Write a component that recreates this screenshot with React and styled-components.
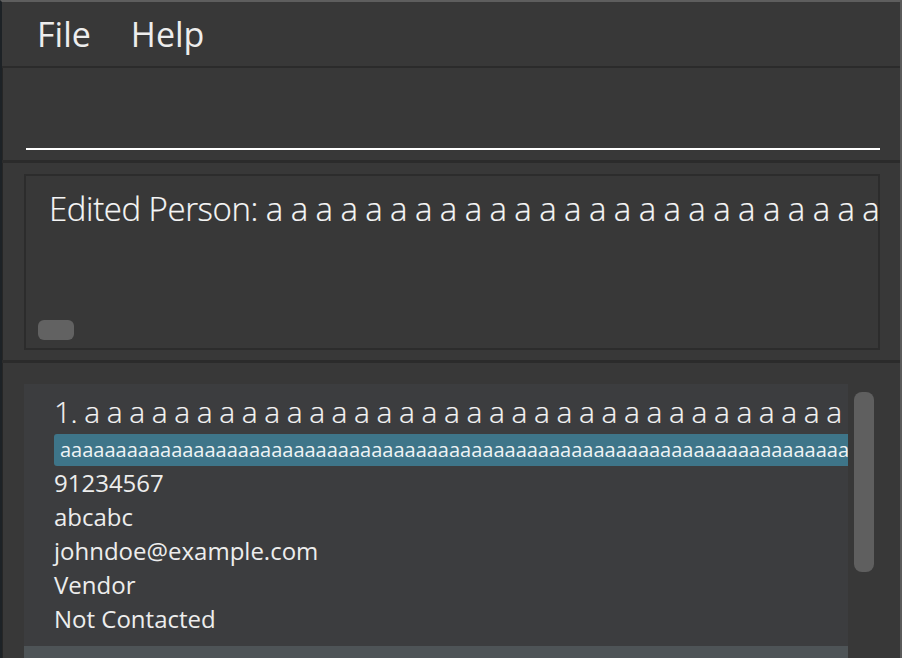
import styled, { createGlobalStyle } from "styled-components";

const GlobalStyle = createGlobalStyle`
  html, body {
    margin: 0;
    padding: 0;
    background: #383838;
  }
  * {
    box-sizing: border-box;
  }
`;

const nameText = "1. " + Array(34).fill("a").join(" ");
const editedText = "Edited Person: " + Array(25).fill("a").join(" ");
const tagText = "a".repeat(90);

const details = [
  "91234567",
  "abcabc",
  "johndoe@example.com",
  "Vendor",
  "Not Contacted",
];

const App = () => {
  return (
    <>
      <GlobalStyle />
      <Window>
        <MenuBar>
          <MenuItem>File</MenuItem>
          <MenuItem>Help</MenuItem>
        </MenuBar>
        <Divider $h={2} />
        <CommandPane>
          <CommandInput type="text" />
        </CommandPane>
        <Divider $h={3} />
        <ResultPane>
          <ResultBox>
            <ResultText>{editedText}</ResultText>
            <HScrollThumb />
          </ResultBox>
        </ResultPane>
        <Divider $h={3} />
        <ListPane>
          <List>
            <Card>
              <Name>{nameText}</Name>
              <Tags>
                <Tag>{tagText}</Tag>
              </Tags>
              {details.map((d) => (
                <Detail key={d}>{d}</Detail>
              ))}
            </Card>
            <NextCard />
          </List>
          <ScrollTrack>
            <ScrollThumb />
          </ScrollTrack>
        </ListPane>
      </Window>
    </>
  );
};

const Window = styled.div`
  width: 902px;
  height: 658px;
  overflow: hidden;
  display: flex;
  flex-direction: column;
  background: #383838;
  border-top: 2px solid #5e5e5e;
  border-left: 2px solid #1d2226;
  border-right: 2px solid #5a5a5a;
  box-shadow: inset 1px 1px 0 #262626;
  font-family: "Open Sans", "Liberation Sans", sans-serif;
  color: #f2f2f2;
`;

const MenuBar = styled.div`
  height: 64px;
  display: flex;
  align-items: center;
  padding-left: 27px;
  background: #383838;
`;

const MenuItem = styled.div`
  font-size: 34px;
  font-weight: 400;
  padding: 0 8px;
  margin-right: 24px;
  color: #ededed;
`;

const Divider = styled.div`
  height: ${(p) => p.$h}px;
  background: #2b2b2b;
  flex-shrink: 0;
`;

const CommandPane = styled.div`
  height: 92px;
  display: flex;
  align-items: flex-end;
  padding: 0 20px 10px 24px;
`;

const CommandInput = styled.input`
  width: 100%;
  background: transparent;
  border: none;
  border-bottom: 2px solid #ffffff;
  outline: none;
  height: 40px;
`;

const ResultPane = styled.div`
  padding: 11px 20px 10px 22px;
`;

const ResultBox = styled.div`
  height: 176px;
  border: 2px solid #2c2c2c;
  background: #383838;
  display: flex;
  flex-direction: column;
  justify-content: space-between;
  padding: 10px 0 8px 12px;
  overflow: hidden;
`;

const ResultText = styled.div`
  font-size: 33px;
  font-weight: 300;
  letter-spacing: -0.4px;
  word-spacing: -0.4px;
  white-space: nowrap;
  overflow: hidden;
  padding-left: 11px;
  color: #f6f6f6;
  -webkit-text-stroke: 0.2px #f6f6f6;
`;

const HScrollThumb = styled.div`
  width: 36px;
  height: 20px;
  border-radius: 6px;
  background: #626262;
`;

const ListPane = styled.div`
  flex: 1;
  display: flex;
  padding: 21px 22px 0 22px;
  min-height: 0;
`;

const List = styled.div`
  width: 826px;
  display: flex;
  flex-direction: column;
  overflow: hidden;
`;

const Card = styled.div`
  background: #3c3d3f;
  padding: 9px 0 10px 30px;
  flex-shrink: 0;
`;

const Name = styled.div`
  font-size: 30px;
  font-weight: 300;
  letter-spacing: -0.6px;
  white-space: nowrap;
  overflow: hidden;
  line-height: 38px;
  color: #f4f4f4;
  -webkit-text-stroke: 0.2px #f4f4f4;
`;

const Tags = styled.div`
  display: flex;
  margin-top: 3px;
`;

const Tag = styled.div`
  flex: 1;
  background: #3e7589;
  border-radius: 3px 0 0 3px;
  height: 32px;
  line-height: 32px;
  padding-left: 6px;
  font-size: 20px;
  white-space: nowrap;
  overflow: hidden;
  color: #eef3f5;
`;

const Detail = styled.div`
  font-size: 24px;
  line-height: 34px;
  white-space: nowrap;
  color: #ededed;
`;

const NextCard = styled.div`
  height: 40px;
  background: #4e5457;
  flex-shrink: 0;
`;

const ScrollTrack = styled.div`
  width: 30px;
  padding: 8px 4px 0 6px;
`;

const ScrollThumb = styled.div`
  width: 20px;
  height: 180px;
  border-radius: 8px;
  background: #5f5f5f;
`;

export default App;
